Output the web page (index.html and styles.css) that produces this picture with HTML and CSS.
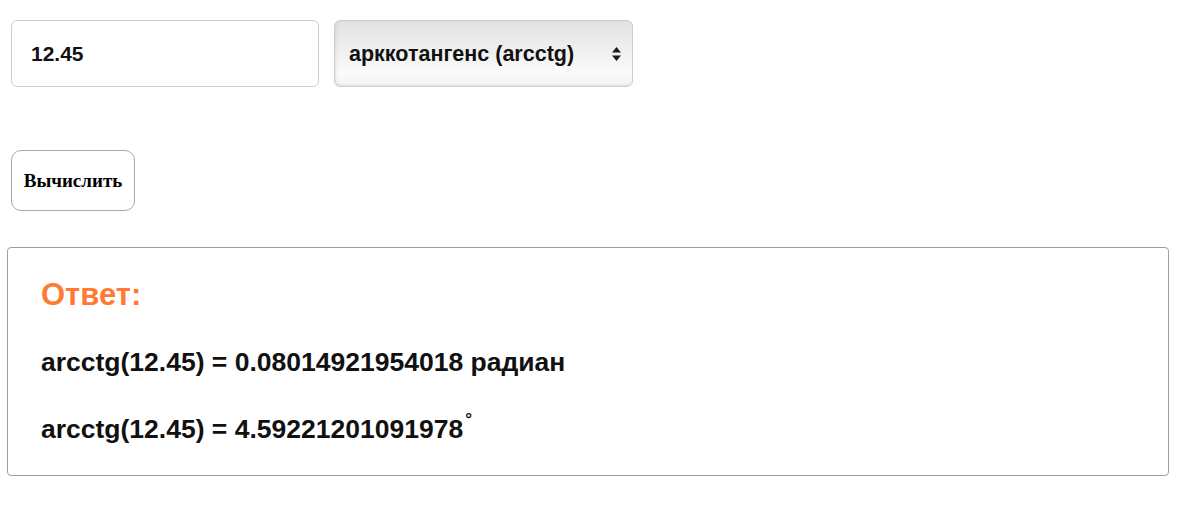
FILE: index.html
```html
<!DOCTYPE html>
<html lang="ru">
<head>
    <meta charset="UTF-8">
    <title>Арккотангенс</title>
    <link rel="stylesheet" href="styles.css">
</head>
<body>
    <div class="calc">
        <div class="fields">
            <input class="num" type="text" value="12.45">
            <div class="select-wrap">
                <select class="func">
                    <option>арккотангенс (arcctg)</option>
                    <option>арктангенс (arctg)</option>
                    <option>арксинус (arcsin)</option>
                    <option>арккосинус (arccos)</option>
                </select>
                <svg class="arrows" width="9" height="14" viewBox="0 0 9 14">
                    <path d="M4.5 0 L9 5.5 L0 5.5 Z" fill="#1a1a1a"/>
                    <path d="M0 8.5 L9 8.5 L4.5 14 Z" fill="#1a1a1a"/>
                </svg>
            </div>
        </div>

        <button class="calc-btn" type="button">Вычислить</button>

        <!-- Result -->
        <div class="answer">
            <h3>Ответ:</h3>
            <p>arcctg(12.45) = 0.08014921954018 радиан</p>
            <p class="deg-row">arcctg(12.45) = 4.59221201091978<sup class="deg">°</sup></p>
        </div>
    </div>
</body>
</html>
```

FILE: styles.css
```css
* {
    box-sizing: border-box;
}

body {
    margin: 0;
    background-color: #fff;
    color: #111;
    font-family: "Liberation Sans", Arial, sans-serif;
}

.calc {
    width: 1169px;
    padding: 20px 0 0 7px;
}

.fields {
    display: flex;
    gap: 15px;
    margin-left: 4px;
}

.num {
    width: 308px;
    height: 67px;
    padding: 0 19px;
    border: 1px solid #cdcdcd;
    border-radius: 6px;
    background-color: #fff;
    color: #111;
    font-family: "Liberation Sans", Arial, sans-serif;
    font-size: 21px;
    font-weight: bold;
    outline: none;
}

.select-wrap {
    position: relative;
}

.func {
    appearance: none;
    -webkit-appearance: none;
    width: 299px;
    height: 67px;
    padding: 0 30px 0 14px;
    border: 1px solid #cdcdcd;
    border-radius: 6px;
    background: linear-gradient(to bottom, #e2e2e2 0%, #eeeeee 40%, #fbfbfb 80%, #f2f2f2 100%);
    box-shadow: inset 0 -2px 2px rgba(0, 0, 0, 0.04), inset 2px 0 3px rgba(0, 0, 0, 0.05);
    color: #111;
    font-family: "Liberation Sans", Arial, sans-serif;
    font-size: 21.5px;
    font-weight: bold;
    outline: none;
}

.arrows {
    position: absolute;
    top: 27px;
    right: 12px;
    pointer-events: none;
}

.calc-btn {
    display: block;
    width: 124px;
    height: 61px;
    margin: 63px 0 0 4px;
    padding: 0;
    border: 1px solid #a8a8a8;
    border-radius: 10px;
    background-color: #fff;
    color: #000;
    font-family: "Liberation Serif", "Times New Roman", serif;
    font-size: 19px;
    font-weight: bold;
}

.answer {
    margin-top: 36px;
    padding: 32px 33px 31px;
    border: 1px solid #a59d93;
    border-radius: 4px;
}

.answer h3 {
    margin: 0;
    color: #ff7b33;
    font-size: 31px;
    font-weight: bold;
    line-height: 30px;
}

.answer p {
    margin: 37px 0 0;
    font-size: 26.5px;
    font-weight: bold;
    line-height: 30px;
}

.answer .deg-row {
    margin-top: 37px;
}

.deg {
    margin-left: 2px;
    font-size: 17px;
    line-height: 0;
    vertical-align: 13px;
}
```
